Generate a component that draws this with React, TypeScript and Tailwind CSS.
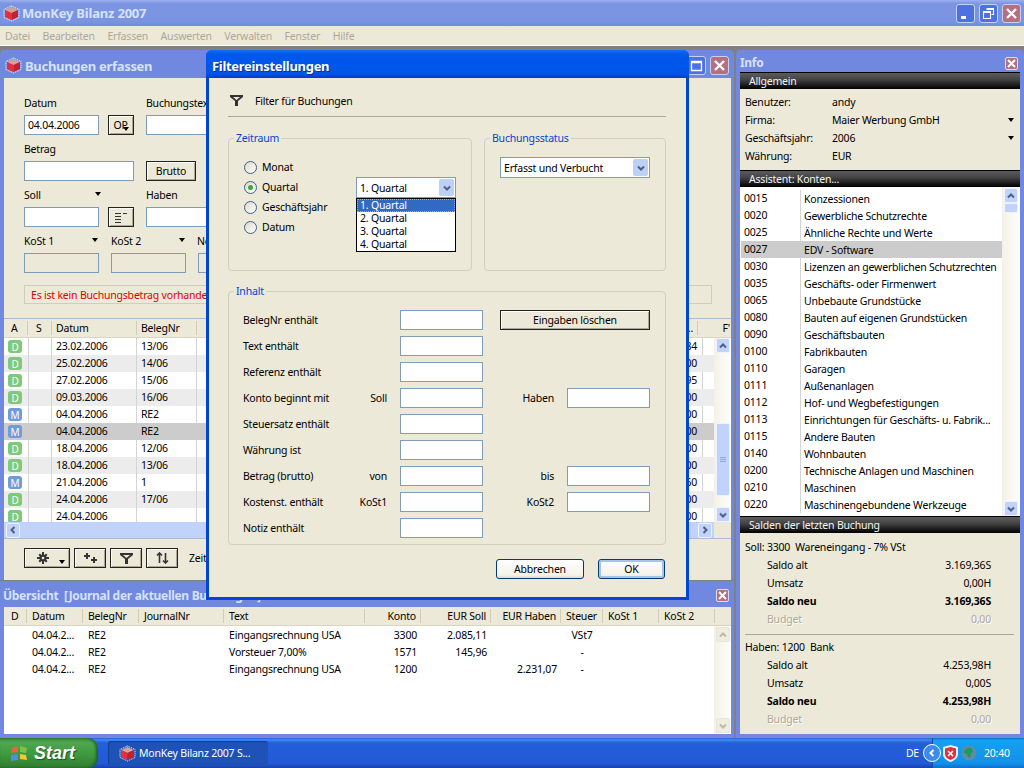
import type { ReactNode } from 'react';

const booking = [
  ['D', '23.02.2006', '13/06', ',84'], ['D', '25.02.2006', '14/06', ',00'], ['D', '27.02.2006', '15/06', ',95'],
  ['D', '09.03.2006', '16/06', ',00'], ['M', '04.04.2006', 'RE2', ',00'], ['M', '04.04.2006', 'RE2', ',00'],
  ['D', '18.04.2006', '12/06', ',00'], ['D', '18.04.2006', '13/06', ',00'], ['M', '21.04.2006', '1', ',60'],
  ['D', '24.04.2006', '17/06', ',00'], ['D', '24.04.2006', '', ',00'],
];

const konten = [
  ['0015', 'Konzessionen'], ['0020', 'Gewerbliche Schutzrechte'], ['0025', 'Ähnliche Rechte und Werte'],
  ['0027', 'EDV - Software'], ['0030', 'Lizenzen an gewerblichen Schutzrechten'], ['0035', 'Geschäfts- oder Firmenwert'],
  ['0065', 'Unbebaute Grundstücke'], ['0080', 'Bauten auf eigenen Grundstücken'], ['0090', 'Geschäftsbauten'],
  ['0100', 'Fabrikbauten'], ['0110', 'Garagen'], ['0111', 'Außenanlagen'], ['0112', 'Hof- und Wegbefestigungen'],
  ['0113', 'Einrichtungen für Geschäfts- u. Fabrik...'], ['0115', 'Andere Bauten'], ['0140', 'Wohnbauten'],
  ['0200', 'Technische Anlagen und Maschinen'], ['0210', 'Maschinen'], ['0220', 'Maschinengebundene Werkzeuge'],
];

const journal = [
  ['04.04.2...', 'RE2', 'Eingangsrechnung USA', '3300', '2.085,11', '', 'VSt7'],
  ['04.04.2...', 'RE2', 'Vorsteuer 7,00%', '1571', '145,96', '', '-'],
  ['04.04.2...', 'RE2', 'Eingangsrechnung USA', '1200', '', '2.231,07', '-'],
];

const inactiveTitle = 'bg-[linear-gradient(#9db0ee,#7b95e3_14%,#7a94e2_85%,#6e88dc)]';
const sep = 'border-r border-[#cfccb8]';

function AppIcon() {
  return (
    <svg width="17" height="17" viewBox="0 0 17 17" className="shrink-0">
      <path d="M8.5 1 16 4.5v8L8.5 16 1 12.5v-8z" fill="none" stroke="#fff" strokeDasharray="1 1" />
      <path d="M8.5 2 15 5 8.5 8 2 5z" fill="#e79a8e" />
      <path d="M2 5l6.5 3v7L2 12z" fill="#e62e3c" />
      <path d="M15 5 8.5 8v7l6.5-3z" fill="#c4202e" />
      <path d="M6 4l2.5-1L11 4 8.5 5z" fill="#7fc7a0" />
    </svg>
  );
}

function CaptionButton({ kind }: { kind: 'min' | 'max' | 'restore' | 'close' }) {
  const bg = kind === 'close' ? 'bg-[#b4707f]' : 'bg-[#4c72e2]';
  return (
    <div className={`flex h-[19px] w-[19px] items-center justify-center rounded-[3px] border border-[#c6d2f4] ${bg}`}>
      <svg width="13" height="13" viewBox="0 0 13 13" fill="none" stroke="#fff">
        {kind === 'min' && <path d="M2 10.5h5" strokeWidth="3" />}
        {kind === 'max' && <path d="M1.5 2.5h10v9h-10zM1.5 3.5h10" strokeWidth="1.3" />}
        {kind === 'restore' && <path d="M4.5 1.5h7v6h-2M1.5 4.500h7v7h-7zM1.5 5.5h7M4.5 2.5h7" strokeWidth="1.1" />}
        {kind === 'close' && <path d="M2 2l9 9M11 2l-9 9" strokeWidth="2.4" />}
      </svg>
    </div>
  );
}

function SmallClose() {
  return (
    <div className="flex h-[13px] w-[13px] items-center justify-center rounded-[2px] border border-[#d8dff5] bg-[#b4707f]">
      <svg width="9" height="9" viewBox="0 0 9 9" fill="none" stroke="#fff" strokeWidth="2"><path d="M1 1l7 7M8 1L1 8" /></svg>
    </div>
  );
}

function Chevron({ dir = 'down', color = '#4d6185' }: { dir?: 'up' | 'down' | 'left' | 'right'; color?: string }) {
  const d = { down: 'M2 3.5 5 6.5 8 3.5', up: 'M2 6.5 5 3.5 8 6.5', left: 'M6.5 2 3.5 5 6.5 8', right: 'M3.5 2 6.5 5 3.5 8' }[dir];
  return <svg width="10" height="10" viewBox="0 0 10 10" fill="none" stroke={color} strokeWidth="2"><path d={d} /></svg>;
}

function ArrowBox({ dir, disabled }: { dir: 'up' | 'down' | 'left' | 'right'; disabled?: boolean }) {
  return (
    <div className={`flex h-[15px] w-[14px] shrink-0 items-center justify-center rounded-[2px] border ${disabled ? 'border-[#e8e6d8] bg-[#efedde]' : 'border-[#eef3fd] bg-[#c1d3fb]'}`}>
      <Chevron dir={dir} color={disabled ? '#bcbaa8' : '#4d6185'} />
    </div>
  );
}

function DownTri({ className = '' }: { className?: string }) {
  return <span className={`inline-block h-0 w-0 border-x-[3.5px] border-t-[4px] border-x-transparent border-t-black ${className}`} />;
}

function Input({ w, disabled, value }: { w: string; disabled?: boolean; value?: string }) {
  return <div className={`h-[20px] shrink-0 border border-[#7f9db9] pl-[3px] leading-[18px] ${w} ${disabled ? 'bg-[#ece9d8]' : 'bg-white'}`}>{value}</div>;
}

function Btn({ className = '', children }: { className?: string; children: ReactNode }) {
  return (
    <div className={`flex shrink-0 items-center justify-center border border-[#222] bg-[#ece9d8] shadow-[inset_1px_1px_0_#fff,inset_-1px_-1px_0_#aca899] ${className}`}>
      {children}
    </div>
  );
}

function Combo({ value, w }: { value: string; w: string }) {
  return (
    <div className={`flex h-[21px] items-center justify-between border border-[#7f9db9] bg-white pl-[3px] pr-px ${w}`}>
      <span>{value}</span>
      <div className="flex h-[17px] w-[15px] items-center justify-center rounded-[2px] bg-[#bed0f6]"><Chevron /></div>
    </div>
  );
}

function Radio({ label, checked }: { label: string; checked?: boolean }) {
  return (
    <div className="flex h-[20px] items-center gap-[5px]">
      <div className="flex h-[13px] w-[13px] items-center justify-center rounded-full border border-[#3f5f8a] bg-[linear-gradient(135deg,#dcd9cc,#fff)]">
        {checked && <div className="h-[5px] w-[5px] rounded-full bg-[#3fa83f]" />}
      </div>
      <span>{label}</span>
    </div>
  );
}

function Group({ legend, className = '', children }: { legend: string; className?: string; children: ReactNode }) {
  return (
    <fieldset className={`rounded-[4px] border border-[#d0d0bf] ${className}`}>
      <legend className="ml-[5px] px-[2px] leading-[14px] text-[#0046d5]">{legend}</legend>
      {children}
    </fieldset>
  );
}

function HeaderBar({ title }: { title: string }) {
  return (
    <div className="flex h-[17px] shrink-0 items-center border-t border-black bg-[linear-gradient(#5c5c5c,#444_40%,#1c1c1c_75%,#000)] pl-[9px] text-[#f4f4f4]">
      {title}
    </div>
  );
}

function Badge({ t }: { t: string }) {
  return (
    <div className={`flex h-[13px] w-[14px] items-center justify-center rounded-[3px] text-[10px] leading-none text-white ${t === 'D' ? 'bg-[#7ec97a]' : 'bg-[#6f9cd8]'}`}>{t}</div>
  );
}

function FilterRow({ label, mid, right }: { label: string; mid?: string; right?: string }) {
  return (
    <>
      <div className="flex items-center justify-between"><span>{label}</span><span>{mid}</span></div>
      <Input w="w-[83px]" />
      {right ? <div className="flex items-center justify-end">{right}</div> : <div />}
      {right ? <Input w="w-[83px]" /> : <div />}
    </>
  );
}

function Saldo({ k, v, bold, muted }: { k: string; v: string; bold?: boolean; muted?: boolean }) {
  const tone = muted ? 'text-[#aca899] [text-shadow:1px_1px_0_#fff]' : bold ? 'font-bold' : '';
  return (
    <div className={`flex h-[18px] items-center justify-between pl-[22px] pr-[29px] ${tone}`}>
      <span>{k}</span><span>{v}</span>
    </div>
  );
}

function Gear() {
  return (
    <svg width="12" height="12" viewBox="0 0 12 12" fill="#333">
      <circle cx="6" cy="6" r="3.5" /><path d="M5 0h2v12H5zM0 5h12v2H0zM1.5 2.9 2.9 1.5l7.6 7.6-1.4 1.4zM9.1 1.5l1.4 1.4-7.6 7.6-1.4-1.4z" />
      <circle cx="6" cy="6" r="1.3" fill="#ece9d8" />
    </svg>
  );
}

function Funnel({ color = '#333' }: { color?: string }) {
  return <svg width="13" height="11" viewBox="0 0 13 11"><path d="M0 0h13v2L8 6v5H5V6L0 2zM3 2l3.5 3L10 2z" fill={color} fillRule="evenodd" /></svg>;
}

export default function App() {
  return (
    <div className="relative flex h-[768px] w-[1024px] flex-col overflow-hidden bg-[#808080] font-['Noto_Sans',sans-serif] text-[10.5px] leading-[14px] tracking-[-0.2px] text-black">
      {/* Main title */}
      <div className={`flex h-[26px] shrink-0 items-center px-[3px] ${inactiveTitle}`}>
        <AppIcon />
        <span className="ml-[2px] text-[13px] font-bold tracking-[-0.2px] text-[#d6e2fa]">MonKey Bilanz 2007</span>
        <div className="ml-auto flex gap-[4px]">
          <CaptionButton kind="min" /><CaptionButton kind="restore" /><CaptionButton kind="close" />
        </div>
      </div>
      {/* Menu */}
      <div className="flex h-[20px] shrink-0 items-center gap-[12.6px] border-b border-[#fff] bg-[#ece9d8] pl-[5px] text-[#aca899]">
        {['Datei', 'Bearbeiten', 'Erfassen', 'Auswerten', 'Verwalten', 'Fenster', 'Hilfe'].map(m => <span key={m}>{m}</span>)}
      </div>

      <div className="flex min-h-0 flex-1 gap-[2px] pt-[4px]">
        {/* Left column */}
        <div className="flex w-[734px] shrink-0 flex-col">
          {/* Buchungen erfassen */}
          <div className="flex h-[530px] flex-col rounded-t-[5px] bg-[#7088e0] pl-[4px] pr-[3px]">
            <div className="flex h-[28px] shrink-0 items-center pl-[1px] pr-[2px] pt-[3px]">
              <AppIcon />
              <span className="ml-[3px] text-[13px] font-bold tracking-[-0.3px] text-[#d6e2fa]">Buchungen erfassen</span>
              <div className="ml-auto flex gap-[4px]">
                <CaptionButton kind="max" /><CaptionButton kind="close" />
              </div>
            </div>
            <div className="flex min-h-0 flex-1 flex-col bg-[#ece9d8]">
              <div className="flex flex-col gap-[7px] pl-[20px] pt-[18px]">
                <div>
                  <div className="flex"><span className="w-[122px]">Datum</span><span>Buchungstext</span></div>
                  <div className="mt-[5px] flex">
                    <Input w="w-[75px]" value="04.04.2006" />
                    <Btn className="ml-[9px] h-[20px] w-[26px] pb-px">OP<DownTri className="-ml-[5px] mt-[9px]" /></Btn>
                    <Input w="ml-[12px] w-[300px]" />
                  </div>
                </div>
                <div>
                  <span>Betrag</span>
                  <div className="mt-[5px] flex">
                    <Input w="w-[110px]" />
                    <Btn className="ml-[12px] h-[20px] w-[50px]">Brutto</Btn>
                  </div>
                </div>
                <div>
                  <div className="flex">
                    <span className="w-[122px]">Soll<DownTri className="relative left-[54px] top-[-3px]" /></span>
                    <span>Haben</span>
                  </div>
                  <div className="mt-[5px] flex">
                    <Input w="w-[75px]" />
                    <Btn className="ml-[9px] h-[20px] w-[26px]">
                      <svg width="13" height="11" viewBox="0 0 13 11" fill="#333"><path d="M0 1h6v1H0zM8 1h4v1H8zM0 4h6v1H0zM0 7h6v1H0zM0 10h6v1H0z" /></svg>
                    </Btn>
                    <Input w="ml-[12px] w-[300px]" />
                  </div>
                </div>
                <div>
                  <div className="flex">
                    <span className="w-[87px]">KoSt 1<DownTri className="relative left-[38px] top-[-3px]" /></span>
                    <span className="w-[86px]">KoSt 2<DownTri className="relative left-[38px] top-[-3px]" /></span>
                    <span>Notiz</span>
                  </div>
                  <div className="mt-[5px] flex gap-[12px]">
                    <Input w="w-[75px]" disabled /><Input w="w-[75px]" disabled /><Input w="w-[300px]" disabled />
                  </div>
                </div>
              </div>
              <div className="ml-[20px] mr-[19px] mt-[12px] flex h-[19px] items-center border border-[#d0cdb8] pl-[6px] text-[#e00000]">
                Es ist kein Buchungsbetrag vorhanden
              </div>
              {/* Table */}
              <div className="mt-[14px] grid h-[220px] grid-cols-[710px_1fr] grid-rows-[19px_184px_16px] border-t border-[#a8bccf]">
                <div className="col-span-2 flex items-center border-b border-[#d8d5c2] bg-[#ece9d8]">
                  <span className={`w-[24px] pl-[7px] ${sep}`}>A</span>
                  <span className={`w-[24px] pl-[8px] ${sep}`}>S</span>
                  <span className={`w-[85px] pl-[4px] ${sep}`}>Datum</span>
                  <span className={`w-[60px] pl-[4px] ${sep}`}>BelegNr</span>
                  <span className={`w-[501px] ${sep} pr-[4px] text-right`}>...</span>
                  <span className="flex-1 pr-[1px] text-right">F'</span>
                </div>
                <div className="overflow-hidden">
                  {booking.map((r, i) => (
                    <div key={i} className={`flex h-[17px] items-center ${i === 5 ? 'bg-[#cccccc]' : i % 2 ? 'bg-[#ececec]' : 'bg-white'}`}>
                      <div className="w-[24px] pl-[4px]"><Badge t={r[0]} /></div>
                      <div className={`h-full w-[24px] ${i === 5 ? '' : 'border-x border-[#d4d4d4]'}`} />
                      <div className={`h-[17px] w-[85px] pl-[4px] leading-[17px] ${i === 5 ? '' : 'border-r border-[#d4d4d4]'}`}>{r[1]}</div>
                      <div className={`h-[17px] w-[60px] pl-[4px] leading-[17px] ${i === 5 ? '' : 'border-r border-[#d4d4d4]'}`}>{r[2]}</div>
                      <div className="h-[17px] w-[505px] pr-[5px] text-right leading-[17px]">{r[3]}</div>
                      <div className={`h-full flex-1 ${i % 2 || i === 5 ? '' : 'border-l border-[#d4d4d4]'}`} />
                    </div>
                  ))}
                </div>
                <div className="flex flex-col bg-[linear-gradient(90deg,#f3f1e7,#fefefb)] pl-[2px]">
                  <ArrowBox dir="up" />
                  <div className="mt-[70px] flex h-[73px] w-[14px] flex-col items-center justify-center gap-px rounded-[2px] border border-[#eef3fd] bg-[#c1d3fb]">
                    <div className="h-px w-[6px] bg-[#8ea6d8]" /><div className="h-px w-[6px] bg-[#8ea6d8]" /><div className="h-px w-[6px] bg-[#8ea6d8]" />
                  </div>
                  <div className="mt-auto"><ArrowBox dir="down" /></div>
                </div>
                <div className="flex items-center justify-between bg-[#c1d3fb] px-[2px]">
                  <ArrowBox dir="left" /><ArrowBox dir="right" />
                </div>
                <div className="bg-[#ece9d8]" />
              </div>
              {/* Toolbar */}
              <div className="flex items-center border-t border-[#a8bccf] pl-[20px] pt-[9px]">
                <Btn className="relative h-[20px] w-[46px] pr-[8px]"><Gear /><DownTri className="absolute bottom-[3px] right-[4px]" /></Btn>
                <Btn className="ml-[4px] h-[20px] w-[32px]">
                  <svg width="14" height="12" viewBox="0 0 14 12" fill="#333"><path d="M3 1h2v2h2v2H5v2H3V5H1V3h2zM10 5h2v2h2v2h-2v2h-2V9H8V7h2z" /></svg>
                </Btn>
                <Btn className="ml-[4px] h-[20px] w-[32px]"><Funnel /></Btn>
                <Btn className="ml-[4px] h-[20px] w-[32px]">
                  <svg width="13" height="12" viewBox="0 0 13 12" fill="none" stroke="#333" strokeWidth="1.6"><path d="M3.5 11V1M1 3.5 3.5 1 6 3.5M9.5 1v10M7 8.5 9.5 11 12 8.5" /></svg>
                </Btn>
                <span className="ml-[11px]">Zeitraum</span>
              </div>
            </div>
          </div>
          {/* Uebersicht */}
          <div className="mt-[1px] flex min-h-0 flex-1 flex-col bg-[#7088e0] pb-[4px] pl-[4px] pr-[3px]">
            <div className="flex h-[26px] shrink-0 items-center pr-[2px] pt-[3px]">
              <span className="-ml-[1px] text-[12px] font-bold tracking-[-0.3px] text-[#d6e2fa]">Übersicht&nbsp; [Journal der aktuellen Buchungen]</span>
              <div className="ml-auto"><SmallClose /></div>
            </div>
            <div className="grid min-h-0 flex-1 grid-cols-[710px_1fr] grid-rows-[19px_1fr] bg-white">
              <div className="col-span-2 flex items-center border-b border-[#d8d5c2] bg-[#ece9d8]">
                <span className={`w-[23px] pl-[7px] ${sep}`}>D</span>
                <span className={`w-[56px] pl-[5px] ${sep}`}>Datum</span>
                <span className={`w-[56px] pl-[5px] ${sep}`}>BelegNr</span>
                <span className={`w-[85px] pl-[5px] ${sep}`}>JournalNr</span>
                <span className={`w-[141px] pl-[5px] ${sep}`}>Text</span>
                <span className={`w-[56px] pr-[4px] text-right ${sep}`}>Konto</span>
                <span className={`w-[70px] pr-[4px] text-right ${sep}`}>EUR Soll</span>
                <span className={`w-[70px] pr-[4px] text-right ${sep}`}>EUR Haben</span>
                <span className={`w-[42px] text-center ${sep}`}>Steuer</span>
                <span className={`w-[56px] pl-[5px] ${sep}`}>KoSt 1</span>
                <span className={`w-[56px] pl-[5px] ${sep}`}>KoSt 2</span>
              </div>
              <div>
                {journal.map((r, i) => (
                  <div key={i} className="flex h-[17px] items-center">
                    <span className="ml-[28px] w-[56px]">{r[0]}</span>
                    <span className="w-[141px]">{r[1]}</span>
                    <span className="w-[135px]">{r[2]}</span>
                    <span className="w-[53px] text-right">{r[3]}</span>
                    <span className="w-[70px] text-right">{r[4]}</span>
                    <span className="w-[70px] text-right">{r[5]}</span>
                    <span className="w-[50px] text-center">{r[6]}</span>
                  </div>
                ))}
              </div>
              <div className="flex flex-col items-start justify-between bg-[linear-gradient(90deg,#f3f1e7,#fefefb)] py-px pl-[2px]">
                <ArrowBox dir="up" disabled /><ArrowBox dir="down" disabled />
              </div>
            </div>
          </div>
        </div>

        {/* Info */}
        <div className="flex min-w-0 flex-1 flex-col rounded-t-[5px] bg-[#7088e0] px-[4px] pb-[4px]">
          <div className="flex h-[22px] shrink-0 items-center pr-[2px] pt-[4px]">
            <span className="text-[12px] font-bold tracking-[-0.3px] text-[#d6e2fa]">Info</span>
            <div className="ml-auto"><SmallClose /></div>
          </div>
          <div className="flex min-h-0 flex-1 flex-col bg-[#ece9d8]">
            <HeaderBar title="Allgemein" />
            <div className="flex flex-col pb-[5px] pl-[5px] pt-[4px]">
              {[['Benutzer:', 'andy'], ['Firma:', 'Maier Werbung GmbH', 1], ['Geschäftsjahr:', '2006', 1], ['Währung:', 'EUR']].map(r => (
                <div key={String(r[0])} className="flex h-[18px] items-center">
                  <span className="w-[87px]">{r[0]}</span><span>{r[1]}</span>
                  {r[2] ? <DownTri className="ml-auto mr-[6px]" /> : null}
                </div>
              ))}
            </div>
            <HeaderBar title="Assistent: Konten..." />
            <div className="flex h-[329px] shrink-0 bg-white">
              <div className="min-w-0 flex-1 pl-px pt-[3px]">
                {konten.map((k, i) => (
                  <div key={k[0]} className={`flex h-[17px] items-center ${i === 3 ? 'bg-[#cccccc]' : ''}`}>
                    <span className={`h-[17px] w-[60px] shrink-0 pl-[3px] leading-[17px] ${i === 3 ? '' : 'border-r border-[#d4d4d4]'}`}>{k[0]}</span>
                    <span className="whitespace-nowrap pl-[3px]">{k[1]}</span>
                  </div>
                ))}
              </div>
              <div className="flex w-[18px] shrink-0 flex-col bg-[linear-gradient(90deg,#f3f1e7,#fefefb)] pl-[2px] pt-[1px]">
                <ArrowBox dir="up" />
                <div className="h-[10px] w-[14px] rounded-[2px] border border-[#eef3fd] bg-[#c1d3fb]" />
                <div className="mt-auto"><ArrowBox dir="down" /></div>
              </div>
            </div>
            <HeaderBar title="Salden der letzten Buchung" />
            <div className="flex flex-col pl-[5px] pt-[5px]">
              <div className="flex h-[18px] items-center">Soll: 3300&nbsp; Wareneingang - 7% VSt</div>
              <Saldo k="Saldo alt" v="3.169,36S" />
              <Saldo k="Umsatz" v="0,00H" />
              <Saldo k="Saldo neu" v="3.169,36S" bold />
              <Saldo k="Budget" v="0,00" muted />
              <div className="mb-[3px] mr-[6px] mt-[6px] h-px bg-[#aca899]" />
              <div className="flex h-[18px] items-center">Haben: 1200&nbsp; Bank</div>
              <Saldo k="Saldo alt" v="4.253,98H" />
              <Saldo k="Umsatz" v="0,00S" />
              <Saldo k="Saldo neu" v="4.253,98H" bold />
              <Saldo k="Budget" v="0,00" muted />
            </div>
          </div>
        </div>
      </div>

      {/* Taskbar */}
      <div className="flex h-[30px] shrink-0 items-center bg-[linear-gradient(#245edb,#3f8cf3_6%,#245edb_16%,#2259d6_85%,#1941a5)] text-white">
        <div className="flex h-full w-[98px] items-center rounded-r-[10px] bg-[linear-gradient(#388e38,#4fa84f_15%,#3c963c_60%,#2f7d2f)] pl-[10px] shadow-[inset_-2px_0_3px_#1f5f1f]">
          <svg width="18" height="17" viewBox="0 0 18 17">
            <path d="M2 3 8 1v6L1 8z" fill="#e8643c" /><path d="M10 1l7 2-1 5-6-1z" fill="#7cc144" />
            <path d="M1 10l7-1v6l-7 1z" fill="#4f8ee0" /><path d="M10 9l6 1 1 5-7-1z" fill="#f5c932" />
          </svg>
          <span className="ml-[6px] font-['Liberation_Sans',sans-serif] text-[18px] font-bold italic leading-none tracking-normal [text-shadow:1px_1px_1px_#1f4f1f]">Start</span>
        </div>
        <div className="ml-[10px] flex h-[24px] w-[160px] items-center rounded-[3px] bg-[#1e52b7] pl-[11px] shadow-[inset_1px_1px_1px_#143f94]">
          <AppIcon />
          <span className="ml-[3px]">MonKey Bilanz 2007 S...</span>
        </div>
        <span className="ml-auto mr-[13px]">DE</span>
        <div className="flex h-full w-[92px] items-center border-l border-[#0f4fa8] bg-[linear-gradient(#0c6fd8,#15a0f0_8%,#1290e8_85%,#0e6ec8)]">
          <div className="-ml-[10px] flex h-[18px] w-[18px] items-center justify-center rounded-full border border-white bg-[#3a8bec]">
            <Chevron dir="left" color="#fff" />
          </div>
          <svg width="15" height="17" viewBox="0 0 15 17" className="ml-[2px]">
            <path d="M7.5 0 15 2v7c0 4-3.5 6.500-7.500 8C3.500 15.500 0 13 0 9V2z" fill="#e8eef8" />
            <path d="M7.5 2 13 3.500V9c0 3-2.500 5-5.500 6C4.500 14 2 12 2 9V3.500z" fill="#e03040" />
            <path d="M5 6l5 5M10 6l-5 5" stroke="#fff" strokeWidth="1.6" />
          </svg>
          <svg width="16" height="16" viewBox="0 0 16 16" className="ml-[3px]">
            <circle cx="8" cy="8" r="7.5" fill="#5c8ca8" /><path d="M3 6c2-3 5-4 7-3l2 3-2 3-1 4-2-1-1-3-3-1z" fill="#1f9a5a" />
          </svg>
          <span className="ml-[7px]">20:40</span>
        </div>
      </div>

      {/* Filter dialog */}
      <div className="absolute left-[206px] top-[50px] flex h-[550px] w-[483px] flex-col rounded-t-[6px] bg-[#0046d5] px-[3px] pb-[3px]">
        <div className="-mx-[3px] flex h-[28px] shrink-0 items-center rounded-t-[6px] bg-[linear-gradient(#1a6ef2,#0058ee_15%,#0055e5_85%,#003dc4)] pl-[6px] pt-[3px]">
          <span className="text-[13px] font-bold tracking-[-0.3px] text-white [text-shadow:1px_1px_0_#0a2f90]">Filtereinstellungen</span>
        </div>
        <div className="flex min-h-0 flex-1 flex-col bg-[#ece9d8] pl-[19px] pr-[20px]">
          <div className="flex h-[39px] shrink-0 items-center border-b border-[#aca899] pl-[2px] pt-[7px]">
            <Funnel />
            <span className="ml-[12px]">Filter für Buchungen</span>
          </div>
          <div className="mt-[14px] flex gap-[12px]">
            <Group legend="Zeitraum" className="h-[140px] w-[244px]">
              <div className="flex items-start pl-[15px] pt-[12px]">
                <div className="w-[112px]">
                  <Radio label="Monat" /><Radio label="Quartal" checked /><Radio label="Geschäftsjahr" /><Radio label="Datum" />
                </div>
                <div className="relative mt-[20px]">
                  <Combo value="1. Quartal" w="w-[100px]" />
                  <div className="absolute left-0 top-full w-[100px] border border-black bg-white leading-[13px]">
                    <div className="border border-dotted border-[#f0a040] bg-[#316ac5] pl-[2px] leading-[11px] text-white">1. Quartal</div>
                    <div className="pl-[3px]">2. Quartal</div>
                    <div className="pl-[3px]">3. Quartal</div>
                    <div className="pl-[3px]">4. Quartal</div>
                  </div>
                </div>
              </div>
            </Group>
            <Group legend="Buchungsstatus" className="h-[140px] w-[182px]">
              <div className="pl-[15px] pt-[12px]"><Combo value="Erfasst und Verbucht" w="w-[150px]" /></div>
            </Group>
          </div>
          <Group legend="Inhalt" className="mt-[13px] h-[261px]">
            <div className="grid grid-cols-[144px_83px_58px_83px] auto-rows-[20px] gap-x-[13px] gap-y-[6px] pl-[14px] pt-[12px]">
              <div className="flex items-center">BelegNr enthält</div>
              <Input w="w-[83px]" />
              <Btn className="col-span-2 ml-[4px] h-[20px]">Eingaben löschen</Btn>
              <FilterRow label="Text enthält" />
              <FilterRow label="Referenz enthält" />
              <FilterRow label="Konto beginnt mit" mid="Soll" right="Haben" />
              <FilterRow label="Steuersatz enthält" />
              <FilterRow label="Währung ist" />
              <FilterRow label="Betrag (brutto)" mid="von" right="bis" />
              <FilterRow label="Kostenst. enthält" mid="KoSt1" right="KoSt2" />
              <FilterRow label="Notiz enthält" />
            </div>
          </Group>
          <div className="mt-[14px] flex justify-end gap-[14px] pr-px">
            <div className="flex h-[20px] w-[88px] items-center justify-center rounded-[3px] border border-[#003c74] bg-[linear-gradient(#fff,#f4f2e8_85%,#dcd8c8)]">Abbrechen</div>
            <div className="flex h-[20px] w-[67px] items-center justify-center rounded-[3px] border border-[#003c74] bg-[linear-gradient(#fff,#f4f2e8_85%,#dcd8c8)] shadow-[inset_0_0_0_2px_#a8c4ee]">OK</div>
          </div>
        </div>
      </div>
    </div>
  );
}
